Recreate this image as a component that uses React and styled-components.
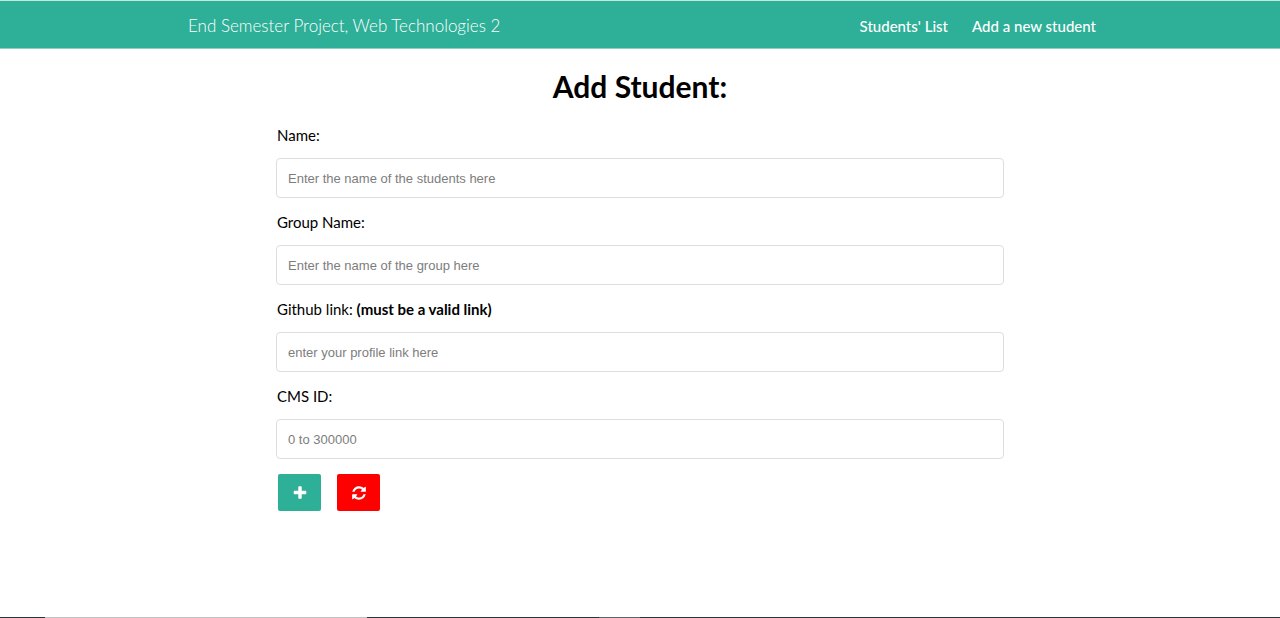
import React from "react";
import styled, { createGlobalStyle } from "styled-components";

const GlobalStyle = createGlobalStyle`
  *, *::before, *::after { box-sizing: border-box; }
  body {
    margin: 0;
    background: #fff;
    color: #000;
    font-family: Lato, "Liberation Sans", sans-serif;
    font-size: 16px;
    line-height: 24px;
  }
`;

const Page = styled.div`
  display: flex;
  flex-direction: column;
  min-height: 100vh;
`;

const Header = styled.header`
  background: #2eaf97;
  border-top: 1px solid #c5e9e2;
  border-bottom: 1px solid #8fcfc2;
`;

const HeaderInner = styled.div`
  display: flex;
  align-items: baseline;
  justify-content: space-between;
  max-width: 912px;
  margin: 0 auto;
  padding: 13px 0 10px 4px;
`;

const Brand = styled.a`
  color: #fff;
  font-size: 17px;
  font-weight: 300;
  text-decoration: none;
`;

const Nav = styled.nav`
  display: flex;
  gap: 24px;
`;

const NavLink = styled.a`
  color: #fff;
  font-size: 15px;
  font-weight: 500;
  text-decoration: none;
`;

const Main = styled.main`
  flex: 1;
  width: 100%;
  max-width: 728px;
  margin: 0 auto;
  padding-top: 17px;
`;

const Title = styled.h1`
  margin: 0 0 17px;
  font-size: 30px;
  font-weight: 700;
  line-height: 40px;
  text-align: center;
`;

const Field = styled.div`
  display: flex;
  flex-direction: column;
  gap: 11px;
  margin-bottom: 12px;
`;

const Label = styled.label`
  padding-left: 1px;
  font-size: 15px;
`;

const TextInput = styled.input`
  width: 100%;
  height: 40px;
  padding: 0 11px;
  border: 1px solid #dedede;
  border-radius: 4px;
  background: #fff;
  font-family: "Liberation Sans", Arial, sans-serif;
  font-size: 13px;
  &::placeholder { color: #7d7d7d; opacity: 1; }
`;

const Actions = styled.div`
  display: flex;
  gap: 16px;
  padding: 3px 2px;
`;

const IconButton = styled.button`
  display: flex;
  align-items: center;
  justify-content: center;
  width: 43px;
  height: 37px;
  padding: 0;
  border: 0;
  border-radius: 2px;
  color: #fff;
  background: ${({ $color }) => $color};
  cursor: pointer;
`;

const Icon = styled.svg`
  width: 16px;
  height: 16px;
  fill: currentColor;
`;

const BottomEdge = styled.footer`
  display: flex;
  height: 1px;
  background: #2b333b;
`;

const EdgePart = styled.span`
  width: ${({ $width }) => $width};
  background: ${({ $color }) => $color};
`;

const fields = [
  { id: "name", label: "Name:", placeholder: "Enter the name of the students here" },
  { id: "group", label: "Group Name:", placeholder: "Enter the name of the group here" },
  { id: "github", label: "Github link: ", note: "(must be a valid link)", placeholder: "enter your profile link here" },
  { id: "cms", label: "CMS ID:", placeholder: "0 to 300000" },
];

export default function App() {
  return (
    <Page>
      <GlobalStyle />
      <Header>
        <HeaderInner>
          <Brand href="#">End Semester Project, Web Technologies 2</Brand>
          <Nav>
            <NavLink href="#students">Students' List</NavLink>
            <NavLink href="#add">Add a new student</NavLink>
          </Nav>
        </HeaderInner>
      </Header>
      <Main>
        <Title>Add Student:</Title>
        <form onSubmit={(e) => e.preventDefault()}>
          {fields.map(({ id, label, note, placeholder }) => (
            <Field key={id}>
              <Label htmlFor={id}>
                {label}
                {note && <b>{note}</b>}
              </Label>
              <TextInput id={id} name={id} type="text" placeholder={placeholder} />
            </Field>
          ))}
          <Actions>
            <IconButton type="submit" $color="#2eaf97" aria-label="Add student">
              <Icon viewBox="0 0 1792 1792" aria-hidden="true">
                <path d="M1600 736v192q0 40-28 68t-68 28h-416v416q0 40-28 68t-68 28h-192q-40 0-68-28t-28-68v-416h-416q-40 0-68-28t-28-68v-192q0-40 28-68t68-28h416v-416q0-40 28-68t68-28h192q40 0 68 28t28 68v416h416q40 0 68 28t28 68z" />
              </Icon>
            </IconButton>
            <IconButton type="reset" $color="#ff0000" aria-label="Reset form">
              <Icon viewBox="-128 -128 1792 1792" aria-hidden="true">
                <path d="M1511 928q0 5-1 7-64 268-268 434.500T764 1536q-146 0-282.500-55T238 1324l-129 129q-19 19-45 19t-45-19-19-45V960q0-26 19-45t45-19h448q26 0 45 19t19 45-19 45l-137 137q71 66 161 102t187 36q134 0 250-65t186-179q11-17 53-117 8-23 30-23h192q13 0 22.500 9.500t9.500 22.500zm25-800v448q0 26-19 45t-45 19h-448q-26 0-45-19t-19-45 19-45l138-138Q969 256 768 256q-134 0-250 65T332 500q-11 17-53 117-8 23-30 23H50q-13 0-22.500-9.500T18 608v-7q65-268 270-434.500T768 0q146 0 284 55.500T1297 212l130-129q19-19 45-19t45 19 19 45z" />
              </Icon>
            </IconButton>
          </Actions>
        </form>
      </Main>
      <BottomEdge>
        <EdgePart $width="3.5%" $color="#2b333b" />
        <EdgePart $width="25.2%" $color="#c0c0c0" />
        <EdgePart $width="18.1%" $color="#2b333b" />
        <EdgePart $width="3.2%" $color="#5c636a" />
      </BottomEdge>
    </Page>
  );
}
